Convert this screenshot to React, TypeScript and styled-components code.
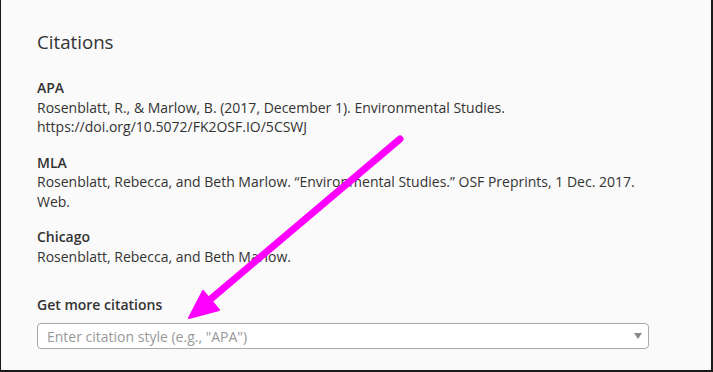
import React from 'react'
import styled, { createGlobalStyle } from 'styled-components'

const GlobalStyle = createGlobalStyle`
  html, body {
    margin: 0;
    padding: 0;
    background: #fafafa;
  }
  body {
    font-family: 'Open Sans', 'Noto Sans', sans-serif;
    color: #333;
  }
`

const Frame = styled.div`
  position: relative;
  box-sizing: border-box;
  width: 713px;
  height: 372px;
  background: #fafafa;
  border-left: 1px solid #1a1a1a;
  border-right: 2px solid #1a1a1a;
  border-bottom: 2px solid #1a1a1a;
  padding: 29px 0 0 36px;
  overflow: hidden;
`

const Title = styled.h2`
  margin: 0 0 23px;
  font-size: 18.7px;
  font-weight: 400;
  line-height: 26px;
  color: #333;
`

const CitationList = styled.div`
  display: flex;
  flex-direction: column;
  gap: 16px;
`

const Citation = styled.div`
  font-size: 14px;
  line-height: 19.5px;
`

const StyleName = styled.div`
  font-weight: 600;
  color: #333;
`

const CitationText = styled.div`
  color: #333;
`

const MoreLabel = styled.div`
  margin-top: 29px;
  font-size: 14px;
  line-height: 19px;
  font-weight: 600;
  color: #333;
`

const StyleSelect = styled.div`
  margin-top: 9px;
  box-sizing: border-box;
  width: 612px;
  height: 26px;
  display: flex;
  align-items: center;
  justify-content: space-between;
  padding: 0 6px 0 9px;
  background: #fff;
  border: 1px solid #aaa;
  border-radius: 4px;
`

const Placeholder = styled.span`
  font-size: 14px;
  color: #999;
`

const Caret = styled.span`
  width: 0;
  height: 0;
  border-left: 4px solid transparent;
  border-right: 4px solid transparent;
  border-top: 6px solid #888;
`

const Annotation = styled.svg`
  position: absolute;
  left: 0;
  top: 0;
  pointer-events: none;
`

const citations = [
  {
    name: 'APA',
    lines: [
      'Rosenblatt, R., & Marlow, B. (2017, December 1). Environmental Studies.',
      'https://doi.org/10.5072/FK2OSF.IO/5CSWJ',
    ],
  },
  {
    name: 'MLA',
    lines: [
      'Rosenblatt, Rebecca, and Beth Marlow. \u201cEnvironmental Studies.\u201d OSF Preprints, 1 Dec. 2017.',
      'Web.',
    ],
  },
  {
    name: 'Chicago',
    lines: ['Rosenblatt, Rebecca, and Beth Marlow.'],
  },
]

export default function App() {
  return (
    <>
      <GlobalStyle />
      <Frame>
        <Title>Citations</Title>
        <CitationList>
          {citations.map((c) => (
            <Citation key={c.name}>
              <StyleName>{c.name}</StyleName>
              {c.lines.map((l) => (
                <CitationText key={l}>{l}</CitationText>
              ))}
            </Citation>
          ))}
        </CitationList>
        <MoreLabel>Get more citations</MoreLabel>
        <StyleSelect>
          <Placeholder>Enter citation style (e.g., "APA")</Placeholder>
          <Caret />
        </StyleSelect>
        <Annotation width="713" height="372" viewBox="0 0 713 372">
          <line x1="399" y1="139" x2="205" y2="303" stroke="#ff00ff" strokeWidth="7" strokeLinecap="round" />
          <polygon points="188,318 202,291 218,310" fill="#ff00ff" stroke="#ff00ff" strokeWidth="2" strokeLinejoin="round" />
        </Annotation>
      </Frame>
    </>
  )
}
